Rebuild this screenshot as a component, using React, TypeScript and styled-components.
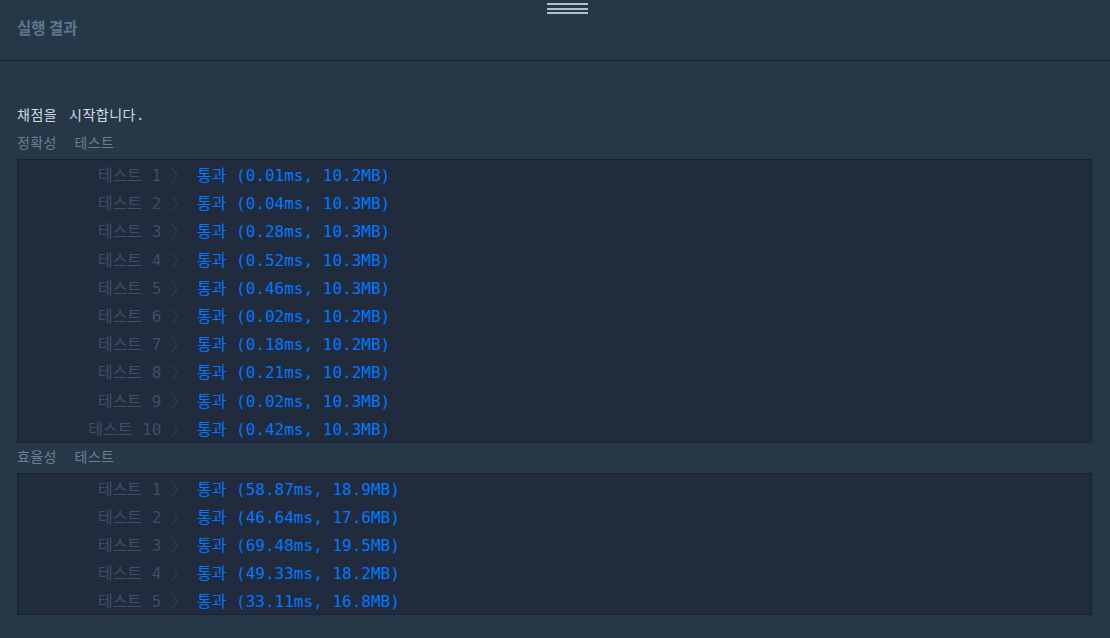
import React from "react";
import styled, { createGlobalStyle } from "styled-components";

const GlobalStyle = createGlobalStyle`
  html, body {
    margin: 0;
    padding: 0;
    background: #263747;
  }
  body {
    font-family: "DejaVu Sans Mono", "Noto Sans CJK KR", monospace;
  }
`;

const Panel = styled.div`
  position: relative;
  width: 1110px;
  height: 638px;
  background: #263747;
  overflow: hidden;
`;

const Handle = styled.div`
  position: absolute;
  top: 3px;
  left: 547px;
  width: 41px;
  display: flex;
  flex-direction: column;
  gap: 2.5px;
`;

const HandleBar = styled.span`
  display: block;
  height: 2px;
  background: #b2c0cc;
`;

const Header = styled.div`
  height: 60px;
  display: flex;
  align-items: center;
  padding: 0 17px;
  border-bottom: 1px solid #172334;
  box-sizing: content-box;
`;

const Title = styled.h6`
  margin: 0;
  margin-top: -7px;
  font-family: "Noto Sans CJK KR", "Noto Sans", sans-serif;
  font-weight: 700;
  font-size: 15.5px;
  color: #5a7892;
`;

const Console = styled.div`
  padding: 40px 18px 0 17px;
  font-family: "DejaVu Sans Mono", "Noto Sans CJK KR", monospace;
`;

const Line = styled.div<{ $tone?: "main" | "muted" }>`
  font-size: 14px;
  line-height: 28px;
  white-space: pre;
  letter-spacing: ${(p) => (p.$tone === "muted" ? "0.4px" : "0.5px")};
  word-spacing: ${(p) => (p.$tone === "muted" ? "0px" : "3px")};
  color: ${(p) => (p.$tone === "muted" ? "#6a8090" : "#d5dbe1")};
`;

const SectionLabel = styled(Line)`
  margin-bottom: 2px;
`;

const ResultBox = styled.div`
  background: #202b3d;
  border: 1px solid #172334;
  display: flex;
  flex-direction: column;
`;

const Row = styled.div<{ $height: number }>`
  display: flex;
  align-items: center;
  height: ${(p) => p.$height}px;
  font-size: 16px;
  white-space: pre;
`;

const Label = styled.span`
  width: 169px;
  text-align: right;
  color: #3e5064;
`;

const Chevron = styled.span`
  color: #2e3f52;
`;

const Result = styled.span`
  padding-left: 10px;
  color: #0078ff;
`;

type TestResult = { ms: string; mb: string };

const accuracy: TestResult[] = [
  { ms: "0.01", mb: "10.2" },
  { ms: "0.04", mb: "10.3" },
  { ms: "0.28", mb: "10.3" },
  { ms: "0.52", mb: "10.3" },
  { ms: "0.46", mb: "10.3" },
  { ms: "0.02", mb: "10.2" },
  { ms: "0.18", mb: "10.2" },
  { ms: "0.21", mb: "10.2" },
  { ms: "0.02", mb: "10.3" },
  { ms: "0.42", mb: "10.3" },
];

const efficiency: TestResult[] = [
  { ms: "58.87", mb: "18.9" },
  { ms: "46.64", mb: "17.6" },
  { ms: "69.48", mb: "19.5" },
  { ms: "49.33", mb: "18.2" },
  { ms: "33.11", mb: "16.8" },
];

function Results({ items, rowHeight }: { items: TestResult[]; rowHeight: number }) {
  return (
    <ResultBox>
      {items.map((r, i) => (
        <Row key={i} $height={rowHeight}>
          <Label>
            {`테스트 ${i + 1} `}
            <Chevron>〉</Chevron>
          </Label>
          <Result>{`통과 (${r.ms}ms, ${r.mb}MB)`}</Result>
        </Row>
      ))}
    </ResultBox>
  );
}

export default function App() {
  return (
    <>
      <GlobalStyle />
      <Panel>
        <Handle>
          <HandleBar />
          <HandleBar />
          <HandleBar />
        </Handle>
        <Header>
          <Title>실행 결과</Title>
        </Header>
        <Console>
          <Line>채점을 시작합니다.</Line>
          <SectionLabel $tone="muted">정확성  테스트</SectionLabel>
          <Results items={accuracy} rowHeight={28.2} />
          <SectionLabel $tone="muted">효율성  테스트</SectionLabel>
          <Results items={efficiency} rowHeight={28} />
        </Console>
      </Panel>
    </>
  );
}
